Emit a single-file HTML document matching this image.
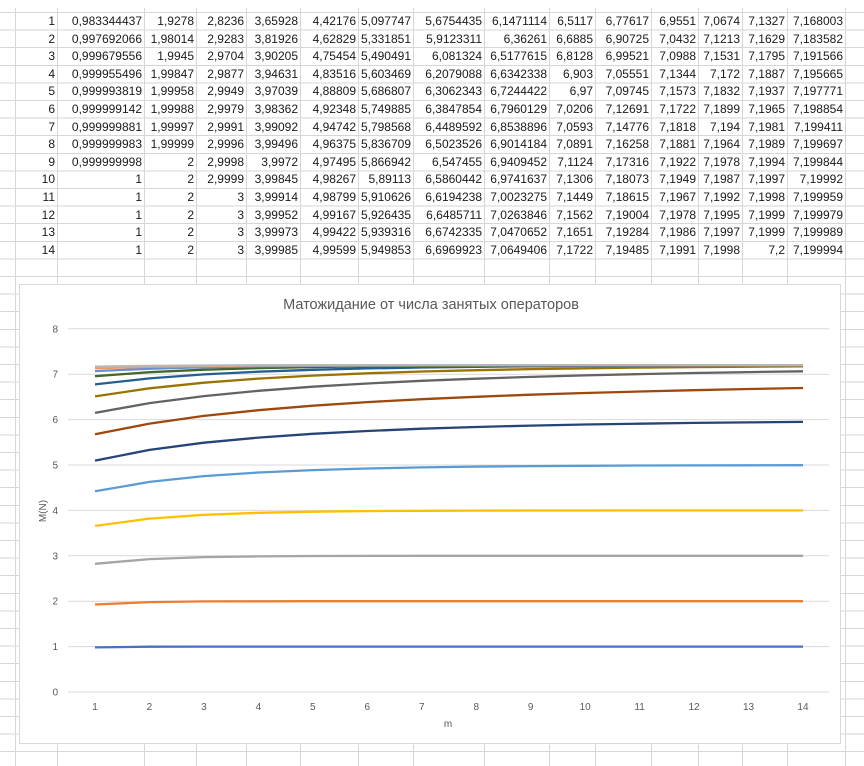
<!DOCTYPE html>
<html><head><meta charset="utf-8">
<style>
html,body{margin:0;padding:0;background:#fff;}
body{width:864px;height:766px;position:relative;overflow:hidden;font-family:"Liberation Sans",sans-serif;}
#grid{position:absolute;left:0;top:8px;width:864px;height:758px;
background-image:repeating-linear-gradient(to bottom,transparent 0,transparent 4px,#d6d6d6 4px,#d6d6d6 5px,transparent 5px,transparent 17.6px);}
.v{position:absolute;top:8px;height:758px;width:1px;background:#d6d6d6;}
table{position:absolute;left:15px;top:13px;border-collapse:collapse;table-layout:fixed;font-size:12px;color:#1a1a1a;}
td{height:17.6px;padding:0 2px 0 0;text-align:right;white-space:nowrap;overflow:hidden;line-height:17.6px;}
#chart{position:absolute;left:19px;top:284px;width:820px;height:458px;background:#fff;border:1px solid #d9d9d9;}
svg text{font-family:"Liberation Sans",sans-serif;}
</style></head><body>
<div id="grid"></div>
<div class="v" style="left:15px"></div><div class="v" style="left:57px"></div><div class="v" style="left:144px"></div><div class="v" style="left:196px"></div><div class="v" style="left:246px"></div><div class="v" style="left:300px"></div><div class="v" style="left:358px"></div><div class="v" style="left:413px"></div><div class="v" style="left:484px"></div><div class="v" style="left:549px"></div><div class="v" style="left:595px"></div><div class="v" style="left:651px"></div><div class="v" style="left:698px"></div><div class="v" style="left:742px"></div><div class="v" style="left:787px"></div><div class="v" style="left:845px"></div>
<table id="t">
<colgroup><col style="width:42px"><col style="width:87px"><col style="width:52px"><col style="width:50px"><col style="width:54px"><col style="width:58px"><col style="width:55px"><col style="width:71px"><col style="width:65px"><col style="width:46px"><col style="width:56px"><col style="width:47px"><col style="width:44px"><col style="width:45px"><col style="width:58px"></colgroup>
<tr><td>1</td><td>0,983344437</td><td>1,9278</td><td>2,8236</td><td>3,65928</td><td>4,42176</td><td>5,097747</td><td>5,6754435</td><td>6,1471114</td><td>6,5117</td><td>6,77617</td><td>6,9551</td><td>7,0674</td><td>7,1327</td><td>7,168003</td></tr>
<tr><td>2</td><td>0,997692066</td><td>1,98014</td><td>2,9283</td><td>3,81926</td><td>4,62829</td><td>5,331851</td><td>5,9123311</td><td>6,36261</td><td>6,6885</td><td>6,90725</td><td>7,0432</td><td>7,1213</td><td>7,1629</td><td>7,183582</td></tr>
<tr><td>3</td><td>0,999679556</td><td>1,9945</td><td>2,9704</td><td>3,90205</td><td>4,75454</td><td>5,490491</td><td>6,081324</td><td>6,5177615</td><td>6,8128</td><td>6,99521</td><td>7,0988</td><td>7,1531</td><td>7,1795</td><td>7,191566</td></tr>
<tr><td>4</td><td>0,999955496</td><td>1,99847</td><td>2,9877</td><td>3,94631</td><td>4,83516</td><td>5,603469</td><td>6,2079088</td><td>6,6342338</td><td>6,903</td><td>7,05551</td><td>7,1344</td><td>7,172</td><td>7,1887</td><td>7,195665</td></tr>
<tr><td>5</td><td>0,999993819</td><td>1,99958</td><td>2,9949</td><td>3,97039</td><td>4,88809</td><td>5,686807</td><td>6,3062343</td><td>6,7244422</td><td>6,97</td><td>7,09745</td><td>7,1573</td><td>7,1832</td><td>7,1937</td><td>7,197771</td></tr>
<tr><td>6</td><td>0,999999142</td><td>1,99988</td><td>2,9979</td><td>3,98362</td><td>4,92348</td><td>5,749885</td><td>6,3847854</td><td>6,7960129</td><td>7,0206</td><td>7,12691</td><td>7,1722</td><td>7,1899</td><td>7,1965</td><td>7,198854</td></tr>
<tr><td>7</td><td>0,999999881</td><td>1,99997</td><td>2,9991</td><td>3,99092</td><td>4,94742</td><td>5,798568</td><td>6,4489592</td><td>6,8538896</td><td>7,0593</td><td>7,14776</td><td>7,1818</td><td>7,194</td><td>7,1981</td><td>7,199411</td></tr>
<tr><td>8</td><td>0,999999983</td><td>1,99999</td><td>2,9996</td><td>3,99496</td><td>4,96375</td><td>5,836709</td><td>6,5023526</td><td>6,9014184</td><td>7,0891</td><td>7,16258</td><td>7,1881</td><td>7,1964</td><td>7,1989</td><td>7,199697</td></tr>
<tr><td>9</td><td>0,999999998</td><td>2</td><td>2,9998</td><td>3,9972</td><td>4,97495</td><td>5,866942</td><td>6,547455</td><td>6,9409452</td><td>7,1124</td><td>7,17316</td><td>7,1922</td><td>7,1978</td><td>7,1994</td><td>7,199844</td></tr>
<tr><td>10</td><td>1</td><td>2</td><td>2,9999</td><td>3,99845</td><td>4,98267</td><td>5,89113</td><td>6,5860442</td><td>6,9741637</td><td>7,1306</td><td>7,18073</td><td>7,1949</td><td>7,1987</td><td>7,1997</td><td>7,19992</td></tr>
<tr><td>11</td><td>1</td><td>2</td><td>3</td><td>3,99914</td><td>4,98799</td><td>5,910626</td><td>6,6194238</td><td>7,0023275</td><td>7,1449</td><td>7,18615</td><td>7,1967</td><td>7,1992</td><td>7,1998</td><td>7,199959</td></tr>
<tr><td>12</td><td>1</td><td>2</td><td>3</td><td>3,99952</td><td>4,99167</td><td>5,926435</td><td>6,6485711</td><td>7,0263846</td><td>7,1562</td><td>7,19004</td><td>7,1978</td><td>7,1995</td><td>7,1999</td><td>7,199979</td></tr>
<tr><td>13</td><td>1</td><td>2</td><td>3</td><td>3,99973</td><td>4,99422</td><td>5,939316</td><td>6,6742335</td><td>7,0470652</td><td>7,1651</td><td>7,19284</td><td>7,1986</td><td>7,1997</td><td>7,1999</td><td>7,199989</td></tr>
<tr><td>14</td><td>1</td><td>2</td><td>3</td><td>3,99985</td><td>4,99599</td><td>5,949853</td><td>6,6969923</td><td>7,0649406</td><td>7,1722</td><td>7,19485</td><td>7,1991</td><td>7,1998</td><td>7,2</td><td>7,199994</td></tr>
</table>
<div id="chart">
<svg id="s" width="820" height="458" viewBox="19 284 820 458" style="position:absolute;left:0;top:0">
<text x="430" y="308" text-anchor="middle" font-size="14.5" fill="#595959">Матожидание от числа занятых операторов</text>
<g id="gl" stroke="#d9d9d9" stroke-width="1"></g>
<g id="yl" font-size="10" fill="#595959" text-anchor="end"></g>
<g id="xl" font-size="10" fill="#595959" text-anchor="middle"></g>
<g id="ln" fill="none" stroke-width="2.3" stroke-linejoin="round"></g>
<text x="447" y="726" text-anchor="middle" font-size="10" fill="#595959">m</text>
<text transform="translate(45,510) rotate(-90)" text-anchor="middle" font-size="10" fill="#595959">M(N)</text>
</svg>
</div>
<script>
var NS="http://www.w3.org/2000/svg";
function el(n,a,p,t){var e=document.createElementNS(NS,n);for(var k in a)e.setAttribute(k,a[k]);if(t!=null)e.textContent=t;document.getElementById(p).appendChild(e);}
function Y(v){return 691-v*45.4;}function X(m){return 94+(m-1)*54.46;}
for(var i=0;i<=8;i++){el("line",{x1:67,x2:828,y1:Y(i),y2:Y(i)},"gl");el("text",{x:57,y:Y(i)+3.5},"yl",""+i);}
for(var m=1;m<=14;m++)el("text",{x:X(m),y:709},"xl",""+m);
var cols=["#4472C4","#ED7D31","#A5A5A5","#FFC000","#5B9BD5","#264478","#9E480E","#636363","#997300","#255E91","#43682B","#698ED0","#F1975A","#B7B7B7"];
var rows=document.querySelectorAll("#t tr");
for(var c=1;c<=14;c++){var pts=[];for(var r=0;r<14;r++){var v=parseFloat(rows[r].children[c].textContent.replace(",","."));pts.push(X(r+1).toFixed(1)+","+Y(v).toFixed(1));}
el("polyline",{points:pts.join(" "),stroke:cols[c-1]},"ln");}
</script>
</body></html>
